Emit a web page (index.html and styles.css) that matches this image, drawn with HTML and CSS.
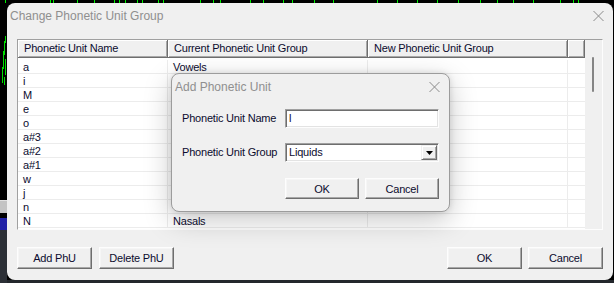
FILE: index.html
```html
<!DOCTYPE html>
<html>
<head>
<meta charset="utf-8">
<title>Change Phonetic Unit Group</title>
<link rel="stylesheet" href="styles.css">
</head>
<body>
<div class="desk">
  <svg class="topstrip" width="614" height="3" viewBox="0 0 614 3">
    <rect width="614" height="3" fill="#000"/>
    <path d="M5.5 0V3M50.5 0V3M53.5 0V3M77.5 0V3M94.5 0V3M114.5 0V3M119.5 0V3M125.5 0V3M137.5 0V3M142.5 0V3M158.5 0V3M163.5 0V3M200.5 0V3M213.5 0V3M220.5 0V3M250.5 0V3M263.5 0V3M283.5 0V3M292.5 0V3M314.5 0V3M333.5 0V3M377.5 0V3M397.5 0V3M417.5 0V3M437.5 0V3M458.5 0V3M480.5 0V3M497.5 0V3M513.5 0V3M533.5 0V3M560.5 0V3M573.5 0V3M578.5 0V3" stroke="#00f000" stroke-width="1"/>
  </svg>
  <div class="deskrow">
    <svg class="leftstrip" width="7" height="280" viewBox="0 0 7 280">
      <rect width="7" height="280" fill="#000"/>
      <path d="M5.5 33V40M4.5 38V52M3.5 48V66M5.5 56V72M2.5 64V80M4.5 74V82" stroke="#00e000" stroke-width="1"/>
      <rect y="197" width="7" height="13" fill="#c4c4c4"/>
      <rect y="197" width="7" height="1" fill="#e2e2e2"/>
      <rect y="215" width="7" height="12" fill="#2020a6"/>
      <rect y="227" width="7" height="53" fill="#2c3036"/>
    </svg>
    <div class="window">
      <div class="titlebar">
        <span class="title">Change Phonetic Unit Group</span>
        <svg class="close" width="11" height="10" viewBox="0 0 11 10"><path d="M0.5 0L10.5 10M10.5 0L0.5 10" stroke="#8a8a8a" stroke-width="1"/></svg>
      </div>
      <div class="list">
        <div class="list-main">
          <div class="hdr">
            <div class="hc c1">Phonetic Unit Name</div>
            <div class="hc c2">Current Phonetic Unit Group</div>
            <div class="hc c3">New Phonetic Unit Group</div>
            <div class="hc c4"></div>
          </div>
          <div class="rows">
            <div class="row"><div class="cell c1">a</div><div class="cell c2">Vowels</div><div class="cell c3"></div><div class="cell c4"></div></div>
            <div class="row"><div class="cell c1">i</div><div class="cell c2"></div><div class="cell c3"></div><div class="cell c4"></div></div>
            <div class="row"><div class="cell c1">M</div><div class="cell c2"></div><div class="cell c3"></div><div class="cell c4"></div></div>
            <div class="row"><div class="cell c1">e</div><div class="cell c2"></div><div class="cell c3"></div><div class="cell c4"></div></div>
            <div class="row"><div class="cell c1">o</div><div class="cell c2"></div><div class="cell c3"></div><div class="cell c4"></div></div>
            <div class="row"><div class="cell c1">a#3</div><div class="cell c2"></div><div class="cell c3"></div><div class="cell c4"></div></div>
            <div class="row"><div class="cell c1">a#2</div><div class="cell c2"></div><div class="cell c3"></div><div class="cell c4"></div></div>
            <div class="row"><div class="cell c1">a#1</div><div class="cell c2"></div><div class="cell c3"></div><div class="cell c4"></div></div>
            <div class="row"><div class="cell c1">w</div><div class="cell c2"></div><div class="cell c3"></div><div class="cell c4"></div></div>
            <div class="row"><div class="cell c1">j</div><div class="cell c2"></div><div class="cell c3"></div><div class="cell c4"></div></div>
            <div class="row"><div class="cell c1">n</div><div class="cell c2"></div><div class="cell c3"></div><div class="cell c4"></div></div>
            <div class="row"><div class="cell c1">N</div><div class="cell c2">Nasals</div><div class="cell c3"></div><div class="cell c4"></div></div>
          </div>
        </div>
        <div class="vscroll"><div class="thumb"></div></div>
      </div>
      <div class="actions">
        <div class="btn-group">
          <button class="btn">Add PhU</button>
          <button class="btn">Delete PhU</button>
        </div>
        <div class="btn-group gap6">
          <button class="btn">OK</button>
          <button class="btn">Cancel</button>
        </div>
      </div>

      <div class="modal">
        <div class="titlebar modal-title">
          <span class="title">Add Phonetic Unit</span>
          <svg class="close" width="11" height="10" viewBox="0 0 11 10"><path d="M0.5 0L10.5 10M10.5 0L0.5 10" stroke="#8a8a8a" stroke-width="1"/></svg>
        </div>
        <div class="modal-body">
          <div class="form">
            <label class="lbl">Phonetic Unit Name</label>
            <div class="field"><span class="field-text">l</span></div>
            <label class="lbl">Phonetic Unit Group</label>
            <div class="field select">
              <span class="field-text">Liquids</span>
              <span class="dd"><svg width="7" height="4" viewBox="0 0 7 4"><path d="M0 0H7L3.5 4Z" fill="#000"/></svg></span>
            </div>
          </div>
          <div class="modal-actions">
            <button class="btn small">OK</button>
            <button class="btn small">Cancel</button>
          </div>
        </div>
      </div>
    </div>
  </div>
</div>
</body>
</html>
```

FILE: styles.css
```css
* { box-sizing: border-box; margin: 0; padding: 0; }
html, body { width: 614px; height: 283px; overflow: hidden; }
body {
  background: #000;
  font-family: "Liberation Sans", Arial, sans-serif;
  font-size: 11px;
  letter-spacing: -0.2px;
  color: #0b0b2e;
}
.desk { display: flex; flex-direction: column; }
.topstrip, .leftstrip { display: block; flex: none; }
.deskrow {
  display: flex;
  background: linear-gradient(#000 0, #000 277px, #23272c 277px);
  height: 280px;
}
.window {
  position: relative;
  width: 606px;
  height: 277px;
  background: #f0f0f0;
  border-radius: 8px;
  display: flex;
  flex-direction: column;
}
.titlebar {
  height: 26px;
  flex: none;
  display: flex;
  align-items: center;
  justify-content: space-between;
  padding: 0 9px 0 3px;
}
.title {
  font-size: 12px;
  letter-spacing: 0;
  color: #8f8f8f;
}
.close { display: block; }

.list {
  margin: 10px 10px 0 10px;
  height: 191px;
  flex: none;
  border: 1px solid;
  border-color: #a0a0a0 #fdfdfd #fdfdfd #a0a0a0;
  background: #fff;
  display: flex;
}
.list-main { width: 567px; display: flex; flex-direction: column; }
.hdr { display: flex; height: 18px; }
.hc {
  height: 18px;
  line-height: 17px;
  padding-left: 6px;
  background: #f0f0f0;
  border-right: 1px solid #6e6e6e;
  border-bottom: 1px solid #6e6e6e;
  box-shadow: inset 1px 1px 0 #fff, inset -1px -1px 0 #a8a8a8;
  white-space: nowrap;
  overflow: hidden;
}
.c1 { width: 150px; }
.c2 { width: 200px; }
.c3 { width: 200px; }
.c4 { width: 17px; }
.rows { padding-top: 2px; }
.row { display: flex; height: 14px; }
.cell {
  height: 14px;
  line-height: 13px;
  padding: 1px 0 0 5px;
  border-right: 1px solid #ececec;
  border-bottom: 1px solid #ececec;
  white-space: nowrap;
}
.row .c4 { border-right: none; }
.vscroll {
  width: 17px;
  background: #f0f0f0;
  padding: 17px 0 0 7px;
}
.thumb { width: 2px; height: 35px; background: #858585; border-radius: 1px; }

.actions {
  display: flex;
  justify-content: space-between;
  padding: 0 10px;
  margin-top: 17px;
}
.btn-group { display: flex; gap: 7px; }
.btn-group.gap6 { gap: 6px; }
.btn {
  width: 75px;
  height: 22px;
  font-family: "Liberation Sans", Arial, sans-serif;
  font-size: 11px;
  letter-spacing: -0.2px;
  color: #0b0b2e;
  background: #f0f0f0;
  border: 1px solid;
  border-color: #fdfdfd #6e6e6e #6e6e6e #fdfdfd;
  box-shadow: inset -1px -1px 0 #a8a8a8, inset 1px 1px 0 #f6f6f6;
}
.btn.small { width: 74px; height: 21px; }

.modal {
  position: absolute;
  left: 164px;
  top: 70px;
  width: 279px;
  height: 139px;
  background: #f0f0f0;
  border: 1px solid #9c9c9c;
  border-radius: 8px;
  box-shadow: 0 8px 28px rgba(0, 0, 0, 0.22), 0 0 6px rgba(0, 0, 0, 0.12);
  display: flex;
  flex-direction: column;
}
.modal-title { padding: 0 9px 0 3px; }
.modal-body { padding: 9px 10px 0 10px; }
.form {
  display: grid;
  grid-template-columns: 103px 154px;
  row-gap: 15px;
  align-items: center;
}
.lbl { line-height: 19px; white-space: nowrap; }
.field {
  height: 19px;
  background: #fff;
  border: 1px solid;
  border-color: #a0a0a0 #fdfdfd #fdfdfd #a0a0a0;
  box-shadow: inset 1px 1px 0 #6e6e6e, inset -1px -1px 0 #e3e3e3;
  display: flex;
  align-items: center;
  padding-left: 3px;
}
.field-text { line-height: 15px; }
.select { justify-content: space-between; padding-right: 1px; }
.dd {
  width: 16px;
  height: 15px;
  background: #f0f0f0;
  border: 1px solid;
  border-color: #f0f0f0 #6e6e6e #6e6e6e #f0f0f0;
  box-shadow: inset 1px 1px 0 #fff, inset -1px -1px 0 #a8a8a8;
  display: flex;
  align-items: center;
  justify-content: center;
}
.dd svg { display: block; }
.modal-actions {
  display: flex;
  justify-content: flex-end;
  gap: 6px;
  margin-top: 16px;
}
```
